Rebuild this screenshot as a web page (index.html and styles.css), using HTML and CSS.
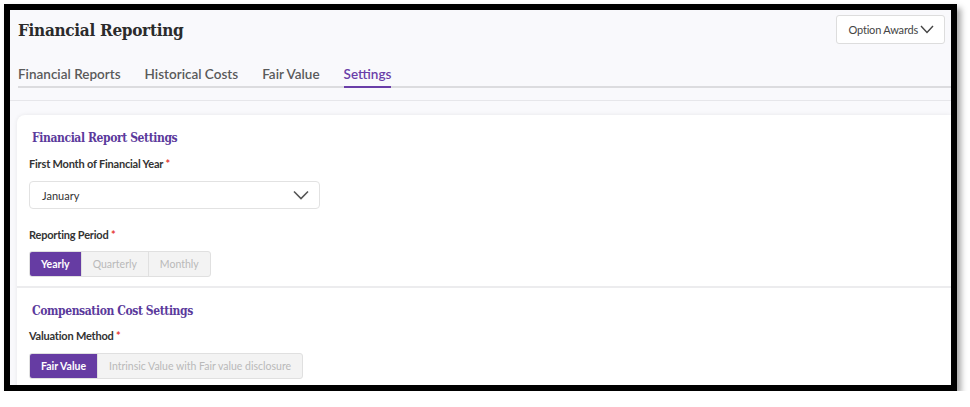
FILE: index.html
```html
<!DOCTYPE html>
<html lang="en">
<head>
    <meta charset="UTF-8">
    <meta name="viewport" content="width=device-width, initial-scale=1.0">
    <title>Financial Reporting</title>
    <link rel="stylesheet" href="styles.css">
</head>
<body>
    <div class="frame">
        <div class="page">
            <div class="header">
                <h1>Financial Reporting</h1>
                <button class="award-select">Option Awards
                    <svg width="14" height="9" viewBox="0 0 14 9"><path d="M1 1 L7 7.5 L13 1" fill="none" stroke="#444" stroke-width="1.4"/></svg>
                </button>
            </div>
            <div class="tabs">
                <div class="tab">Financial Reports</div>
                <div class="tab">Historical Costs</div>
                <div class="tab">Fair Value</div>
                <div class="tab active">Settings</div>
            </div>
            <div class="rule"></div>

            <div class="card">
                <div class="section">
                    <h2>Financial Report Settings</h2>
                    <div class="label">First Month of Financial Year <span class="req">*</span></div>
                    <div class="select">
                        <span>January</span>
                        <svg width="16" height="10" viewBox="0 0 16 10"><path d="M1 1.5 L8 8.5 L15 1.5" fill="none" stroke="#555" stroke-width="1.6"/></svg>
                    </div>
                    <div class="label spaced">Reporting Period <span class="req">*</span></div>
                    <div class="segmented">
                        <div class="seg on">Yearly</div>
                        <div class="seg">Quarterly</div>
                        <div class="seg">Monthly</div>
                    </div>
                </div>
                <div class="section">
                    <h2>Compensation Cost Settings</h2>
                    <div class="label">Valuation Method <span class="req">*</span></div>
                    <div class="segmented">
                        <div class="seg on">Fair Value</div>
                        <div class="seg">Intrinsic Value with Fair value disclosure</div>
                    </div>
                </div>
            </div>
        </div>
    </div>
</body>
</html>
```

FILE: styles.css
```css
body {
    margin: 0;
    background-color: #fff;
    font-family: Lato, "Open Sans", sans-serif;
}

.frame {
    margin: 4px 0 0 4px;
    width: 941px;
    height: 375px;
    border: 6px solid #000;
    box-shadow: 4px 4px 6px rgba(0, 0, 0, 0.35);
    overflow: hidden;
}

.page {
    height: 100%;
    background-color: #f9f9fc;
    padding: 5px 0 0 7px;
    box-sizing: border-box;
}

.header {
    display: flex;
    justify-content: space-between;
    align-items: center;
    padding-right: 6px;
}

.header h1 {
    margin: 0 0 0 1px;
    font-family: "DejaVu Serif", serif;
    font-stretch: condensed;
    font-size: 17px;
    letter-spacing: -0.3px;
    font-weight: bold;
    color: #2b2b2b;
}

.award-select {
    display: flex;
    align-items: center;
    gap: 2px;
    height: 29px;
    padding: 0 10px 0 12px;
    background-color: #fff;
    border: 1px solid #ddd;
    border-radius: 3px;
    font-family: Lato, sans-serif;
    font-size: 11px;
    letter-spacing: -0.2px;
    color: #444;
}

.tabs {
    display: flex;
    gap: 24px;
    margin: 21px 0 0 1px;
    border-bottom: 2px solid #dcdcdf;
}

.tab {
    font-size: 13.5px;
    line-height: 18px;
    padding-bottom: 3px;
    margin-bottom: -2px;
    color: #5a5a5a;
    font-weight: 600;
    border-bottom: 2px solid transparent;
}

.tab.active {
    color: #6a3ea8;
    border-bottom-color: #6a3ea8;
}

.rule {
    margin: 12px 0 0 -7px;
    border-top: 1px solid #e6e6ea;
}

.card {
    margin-top: 14px;
    background-color: #fff;
    border-radius: 8px 0 0 0;
    box-shadow: 0 0 4px rgba(0, 0, 0, 0.08);
    height: 300px;
}

.section {
    padding: 15px 12px 9px;
}

.section + .section {
    border-top: 2px solid #ececee;
}

.section h2 {
    margin: 0 0 11px 3px;
    font-family: "DejaVu Serif", serif;
    font-stretch: condensed;
    font-size: 12px;
    letter-spacing: -0.4px;
    line-height: 16px;
    font-weight: bold;
    color: #5b3a9c;
}

.section + .section h2 {
    margin-bottom: 10px;
}

.label {
    font-size: 11px;
    letter-spacing: -0.2px;
    line-height: 14px;
    font-weight: bold;
    color: #333;
    margin-bottom: 10px;
}

.label.spaced {
    margin-top: 19px;
    margin-bottom: 9px;
}

.req {
    color: #e53935;
}

.select {
    display: flex;
    justify-content: space-between;
    align-items: center;
    width: 291px;
    height: 28px;
    box-sizing: border-box;
    padding: 0 10px 0 12px;
    border: 1px solid #e2e2e2;
    border-radius: 4px;
    font-size: 11px;
    color: #333;
}

.segmented {
    display: inline-flex;
    height: 26px;
    border: 1px solid #e0e0e0;
    border-radius: 3px;
    background-color: #f3f3f3;
    box-sizing: border-box;
    overflow: hidden;
}

.seg {
    display: flex;
    align-items: center;
    padding: 0 11px;
    font-size: 10.5px;
    color: #b9b9b9;
    border-left: 1px solid #e0e0e0;
}

.seg:first-child {
    border-left: none;
}

.seg.on {
    background-color: #663ca3;
    color: #fff;
    font-weight: bold;
}
```
